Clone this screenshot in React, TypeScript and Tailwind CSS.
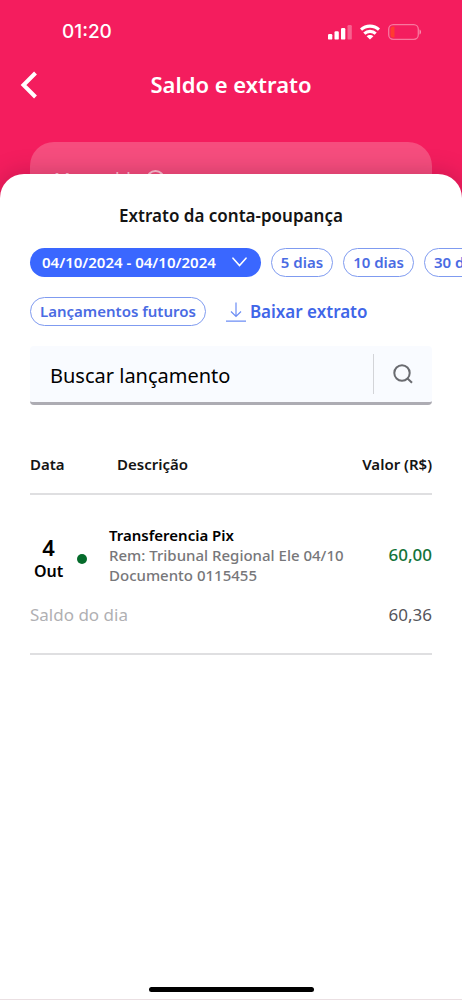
import React from "react";

const periods = ["5 dias", "10 dias", "30 dias"];

function StatusBar() {
  return (
    <div className="flex h-16 items-center justify-between pr-10 pl-[62px] font-[Inter,sans-serif]">
      <span className="text-[19px] leading-6 font-medium">01:20</span>
      <div className="flex items-center gap-2">
        <svg width="24" height="16" viewBox="0 0 24 16" fill="currentColor" aria-hidden="true">
          <rect x="0" y="10" width="4.3" height="5.6" rx="1.2" />
          <rect x="6.5" y="7.2" width="4.3" height="8.4" rx="1.2" />
          <rect x="13" y="4" width="4.3" height="11.6" rx="1.2" />
          <rect x="19.5" y="1" width="4.3" height="14.6" rx="1.2" opacity="0.3" />
        </svg>
        <svg width="20" height="16" viewBox="0 0 20 16" fill="none" stroke="currentColor" strokeWidth="3.1" aria-hidden="true">
          <path d="M1 5.6C6 .9 14 .9 19 5.6" />
          <path d="M4.3 9.6c3.2-3 8.2-3 11.4 0" />
          <path d="M10 15.600 6.600 12.300c1.700-1.700 5.100-1.700 6.800 0z" fill="currentColor" stroke="none" />
        </svg>
        <svg width="34" height="16" viewBox="0 0 34 16" fill="none" aria-hidden="true">
          <rect x="0.7" y="0.7" width="29.6" height="14.6" rx="4.5" stroke="#fff" strokeOpacity="0.4" strokeWidth="1.3" />
          <path d="M31.5 5.5c2 .6 2 4.4 0 5z" fill="#fff" fillOpacity="0.5" />
          <path d="M5 2.5h1.500v11H5A2.500 2.500 0 0 1 2.500 11V5A2.500 2.500 0 0 1 5 2.500z" fill="#ff3b30" />
        </svg>
      </div>
    </div>
  );
}

function Filters() {
  return (
    <div className="mt-5 flex flex-col gap-5 text-[15px] leading-5 font-semibold text-[#4a6be3]">
      <div className="flex gap-[10px] overflow-x-auto pl-[30px] whitespace-nowrap [scrollbar-width:none]">
        <button className="flex h-[29px] shrink-0 items-center gap-4 rounded-full bg-[#3a67ff] pr-[14px] pb-px pl-[12px] text-white">
          04/10/2024 - 04/10/2024
          <svg width="15" height="10" viewBox="0 0 15 10" fill="none" stroke="currentColor" strokeWidth="1.6" strokeLinecap="round" aria-hidden="true">
            <path d="M1 1.200 7.500 8.500 14 1.200" />
          </svg>
        </button>
        {periods.map((p) => (
          <button key={p} className="h-[29px] shrink-0 rounded-full border border-[#7f9bf0] px-[9px] pb-px">
            {p}
          </button>
        ))}
      </div>
      <div className="flex items-center gap-5 px-[30px]">
        <button className="h-[29px] rounded-full border border-[#7f9bf0] px-[9px] pb-px">Lançamentos futuros</button>
        <button className="flex items-center gap-1 text-[17px] text-[#3f66e8]">
          <svg width="20" height="20" viewBox="0 0 20 20" fill="none" stroke="#6c8df5" strokeWidth="1.2" aria-hidden="true">
            <path d="M10 .5v14M5 9.500l5 5 5-5M0 19.200h20" />
          </svg>
          Baixar extrato
        </button>
      </div>
    </div>
  );
}

function Search() {
  return (
    <form className="mx-[30px] mt-5 flex h-[59px] items-center rounded-sm border-b-3 border-[#adacb3] bg-[#f9fbff]" onSubmit={(e) => e.preventDefault()}>
      <input
        type="text"
        aria-label="Buscar lançamento"
        placeholder="Buscar lançamento"
        className="min-w-0 flex-1 bg-transparent pt-1 pl-5 text-[20px] leading-6 text-black outline-none placeholder:text-black"
      />
      <button aria-label="Buscar" className="flex h-10 w-[59px] items-center justify-center border-l border-[#d3d4d8] text-[#6a6b70]">
        <svg width="20" height="20" viewBox="0 0 20 20" fill="none" stroke="currentColor" strokeWidth="2" aria-hidden="true">
          <circle cx="9" cy="9" r="7.7" />
          <path d="m14.500 14.500 4.500 4.300" />
        </svg>
      </button>
    </form>
  );
}

function Statement() {
  return (
    <div className="mx-[30px] mt-[33px]">
      <table className="w-full border-collapse text-left text-[15px] leading-5">
        <thead>
          <tr className="h-14 border-b-2 border-[#dfdfe1] text-[#141414]">
            <th className="w-[79px] pb-1 font-semibold">Data</th>
            <th className="pb-1 pl-2 font-semibold">Descrição</th>
            <th className="pb-1 text-right font-semibold">Valor (R$)</th>
          </tr>
        </thead>
        <tbody>
          <tr>
            <td className="pt-[38px]">
              <div className="flex items-center gap-[14px] pl-1">
                <div className="text-center text-[16px] leading-6 font-semibold text-black">
                  <div className="text-[22px]">4</div>
                  Out
                </div>
                <span className="size-[10px] rounded-full bg-[#056b2b]" />
              </div>
            </td>
            <td className="pt-[30px] font-medium whitespace-nowrap text-[#77777a]">
              <div className="font-semibold text-black">Transferencia Pix</div>
              <div>Rem: Tribunal Regional Ele 04/10</div>
              <div>Documento 0115455</div>
            </td>
            <td className="pt-[30px] text-right text-[17px] font-medium text-[#13733a]">60,00</td>
          </tr>
          <tr className="border-b-2 border-[#dfdfe1] text-[17px]">
            <td colSpan={2} className="pt-5 pb-7 text-[#b0b0b3]">Saldo do dia</td>
            <td className="pt-5 pb-7 text-right text-[#55555a]">60,36</td>
          </tr>
        </tbody>
      </table>
    </div>
  );
}

export default function App() {
  return (
    <main className="flex min-h-screen flex-col overflow-hidden border-b border-[#eadfe2] bg-[#f41d5e] font-['Noto_Sans',sans-serif] text-white">
      <StatusBar />
      <header className="grid h-[42px] grid-cols-[1fr_auto_1fr] items-center px-5">
        <button aria-label="Voltar" className="w-5">
          <svg width="18" height="28" viewBox="0 0 18 28" fill="none" stroke="currentColor" strokeWidth="4" aria-hidden="true">
            <path d="M15.500 2 3.500 14l12 12" />
          </svg>
        </button>
        <h1 className="pb-[2px] text-[22px] leading-7 font-semibold">Saldo e extrato</h1>
      </header>
      <div className="mx-[30px] mt-9 -mb-8 flex h-16 items-start gap-1 rounded-3xl bg-[#f64d7e] px-6 pt-[27px] text-[18px] leading-5 text-[#ffc4d4]">
        Meu saldo
        <span className="mt-px flex size-[19px] items-center justify-center rounded-full border-2 text-[12px]">?</span>
      </div>
      <section className="relative flex flex-1 flex-col rounded-t-3xl bg-white shadow-[0_0_24px_rgba(60,0,30,0.25)]">
        <h2 className="mt-[30px] text-center text-[17px] leading-6 font-semibold text-[#141414]">Extrato da conta-poupança</h2>
        <Filters />
        <Search />
        <Statement />
        <div className="mx-auto mt-auto mb-[7px] h-[5px] w-[165px] rounded-full bg-black" />
      </section>
    </main>
  );
}
